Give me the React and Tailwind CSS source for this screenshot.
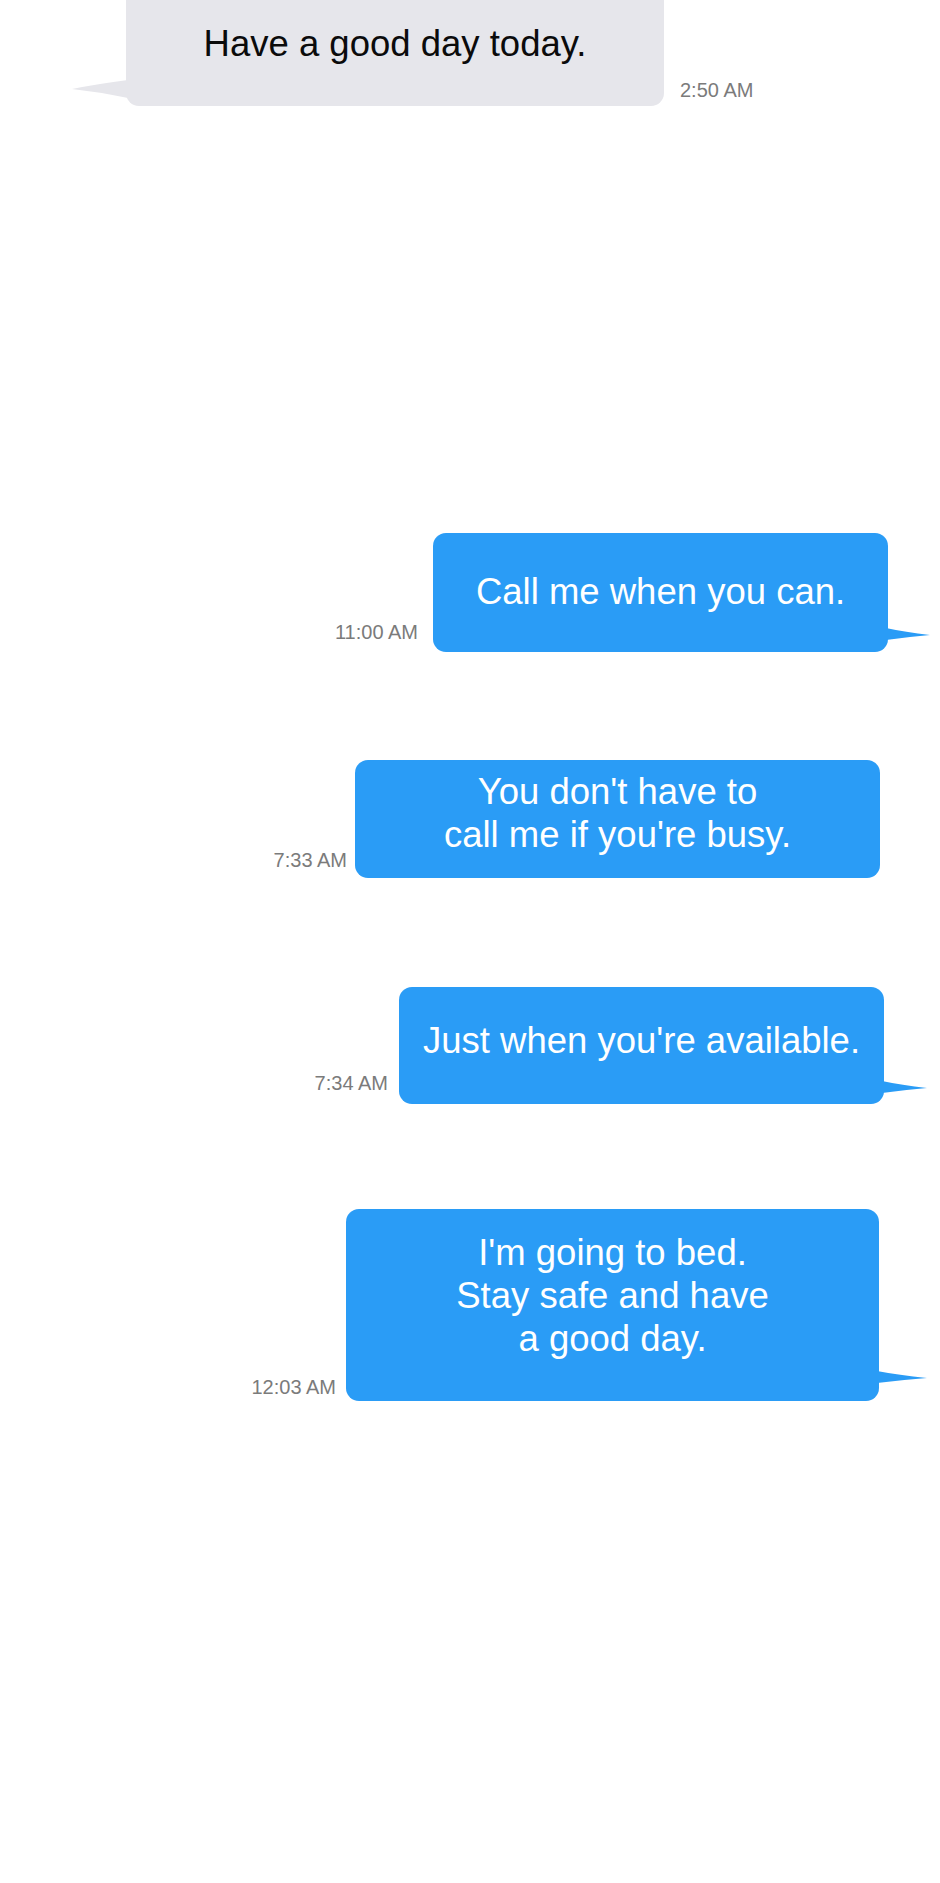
const BLUE = 'bg-[#2a9cf6]'

function TailRight({ bottom, reach, className }) {
    // little pointed tail sticking out of the right side of a sent bubble
    return (
        <svg
            className={`absolute ${className}`}
            style={{ bottom, left: 'calc(100% - 2px)' }}
            width={reach + 2}
            height="16"
            viewBox={`0 0 ${reach + 2} 16`}
        >
            <path d={`M0 0 Q${reach * 0.45} 4 ${reach + 2} 7 Q${reach * 0.5} 9 0 12 Z`} fill="#2a9cf6" />
        </svg>
    )
}

function Sent({ lines, width, height, pr, mt, gap, tsMb, textPb, time, tail }) {
    return (
        <div className="flex justify-end items-end" style={{ paddingRight: pr, marginTop: mt }}>
            <span
                className="text-[20px] leading-[22px] text-[#7b7b7b] whitespace-nowrap"
                style={{ marginRight: gap, marginBottom: tsMb }}
            >
                {time}
            </span>
            <div
                className={`relative ${BLUE} rounded-[13px] flex flex-col items-center justify-center text-white text-[36.5px] leading-[43px] text-center`}
                style={{ width, height, paddingBottom: textPb }}
            >
                {lines.map((l) => (
                    <span key={l} className="whitespace-nowrap">{l}</span>
                ))}
                {tail && <TailRight bottom={tail.bottom} reach={tail.reach} />}
            </div>
        </div>
    )
}

export default function App() {
    return (
        <div className="w-[940px] h-[1883px] bg-white overflow-hidden font-['Liberation_Sans',Arial,sans-serif]">
            {/* received message, cut off at the top */}
            <div className="flex items-end pl-[126px]">
                <div className="relative w-[538px] h-[106px] bg-[#e6e6eb] rounded-b-[13px] flex items-center justify-center pb-[20px] text-[36.5px] leading-[43px] text-[#0b0b0b]">
                    <span className="whitespace-nowrap">Have a good day today.</span>
                    <svg className="absolute left-[-54px] bottom-[8px]" width="56" height="18" viewBox="0 0 56 18">
                        <path d="M56 0 Q25 4 0 9 Q28 12 56 18 Z" fill="#e6e6eb" />
                    </svg>
                </div>
                <span className="ml-[16px] mb-[5px] text-[20px] leading-[22px] text-[#7b7b7b]">2:50 AM</span>
            </div>

            <Sent
                lines={['Call me when you can.']}
                width={455} height={119} pr={52} mt={427} gap={15} tsMb={9} textPb={3}
                time="11:00 AM"
                tail={{ bottom: 8, reach: 42 }}
            />
            <Sent
                lines={["You don't have to", "call me if you're busy."]}
                width={525} height={118} pr={60} mt={108} gap={8} tsMb={7} textPb={12}
                time="7:33 AM"
            />
            <Sent
                lines={["Just when you're available."]}
                width={485} height={117} pr={56} mt={109} gap={11} tsMb={10} textPb={11}
                time="7:34 AM"
                tail={{ bottom: 7, reach: 43 }}
            />
            <Sent
                lines={["I'm going to bed.", 'Stay safe and have', 'a good day.']}
                width={533} height={192} pr={61} mt={105} gap={10} tsMb={3} textPb={20}
                time="12:03 AM"
                tail={{ bottom: 14, reach: 48 }}
            />
        </div>
    )
}
